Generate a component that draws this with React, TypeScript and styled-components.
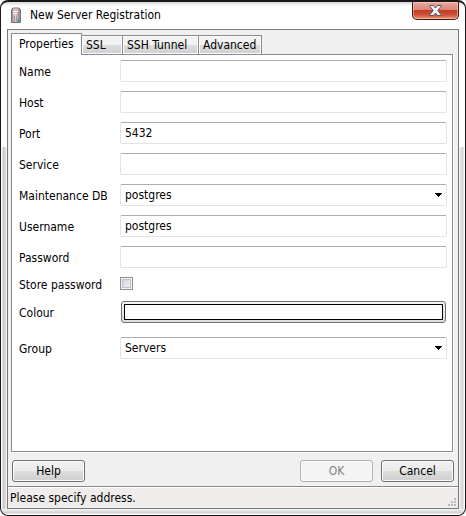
import React, { useState } from "react";
import styled, { createGlobalStyle } from "styled-components";

const GlobalStyle = createGlobalStyle`
  * { box-sizing: border-box; }
  body { margin: 0; background: #fff; }
  body, button, input, select {
    font-family: "DejaVu Sans Condensed", "DejaVu Sans", sans-serif;
    font-size: 12px;
    color: #000;
  }
`;

const Window = styled.form`
  display: flex;
  flex-direction: column;
  min-height: 100vh;
  padding: 0 6px 6px;
  border: 1px solid #1c171b;
  border-top-width: 2px;
  border-radius: 8px;
  background:
    linear-gradient(0deg, #fff 0 1px, #d0cece 2px, #f6f5f5 6px, transparent 6px) 0 100% / 100% 7px no-repeat,
    linear-gradient(90deg, #fff 0 1px, #c6c2c2 2px, #f4f2f2 6px, transparent 6px) 0 145px / 7px 100% no-repeat,
    linear-gradient(270deg, #fff 0 1px, #d2cfcf 2px, #f4f2f2 6px, transparent 6px) 100% 145px / 7px 100% no-repeat,
    linear-gradient(180deg, #d8d5d6, #fff 4px);
`;

const TitleBar = styled.header`
  display: flex;
  align-items: flex-start;
  height: 27px;
  padding-left: 4px;
`;

const ServerIcon = styled.svg`
  flex: none;
  width: 10px;
  height: 17px;
  margin: 5px 9px 0 0;
`;

const Title = styled.h1`
  flex: 1;
  margin: 5px 0 0;
  font-size: 12px;
  font-weight: 400;
  line-height: 16px;
`;

const CloseButton = styled.button`
  display: flex;
  align-items: center;
  justify-content: center;
  width: 47px;
  height: 18px;
  padding: 0;
  border: 1px solid #4a1612;
  border-top: 0;
  border-radius: 0 0 5px 5px;
  background: linear-gradient(#e8a99c, #d98778 46%, #c43c24 50%, #cf5036 75%, #e59a78);
  box-shadow: inset 0 0 0 1px rgba(255, 220, 210, 0.5);
`;

const Client = styled.div`
  flex: 1;
  display: flex;
  flex-direction: column;
  border: 1px solid #777b7b;
  background: #f0f0f0;
`;

const Notebook = styled.div`
  flex: 1;
  display: flex;
  flex-direction: column;
  padding: 3px 5px 0 3px;
`;

const TabStrip = styled.div`
  display: flex;
  align-items: flex-end;
`;

const Tab = styled.button<{ $active: boolean; $width: number }>`
  width: ${(p) => p.$width}px;
  height: ${(p) => (p.$active ? 22 : 19)}px;
  margin-bottom: ${(p) => (p.$active ? -1 : 0)}px;
  padding: 0 0 ${(p) => (p.$active ? 2 : 0)}px ${(p) => (p.$active ? 7 : 4)}px;
  position: relative;
  border: 1px solid #898c95;
  border-bottom: 0;
  background: ${(p) => (p.$active ? "#fff" : "linear-gradient(#f2f2f2 0 48%, #dddddd 52%, #cfcfcf)")};
  box-shadow: inset 0 0 0 1px #fbfbfb;
  text-align: left;
  white-space: nowrap;

  & + & { border-left-width: 0; }
`;

const Panel = styled.div`
  flex: 1;
  padding: 5px 5px 0 7px;
  border: 1px solid #898c95;
  background: #fff;
  box-shadow: 1px 1px 0 #fff;
`;

const Fields = styled.div`
  display: flex;
  flex-direction: column;
  gap: 9px;
`;

const Field = styled.div<{ $height?: number; $before?: number }>`
  display: grid;
  grid-template-columns: 101px 1fr;
  grid-template-rows: ${(p) => p.$height ?? 22}px;
  align-items: center;
  margin-top: ${(p) => p.$before ?? 0}px;
`;

const Label = styled.label`
  padding-top: 2px;
  line-height: 16px;
  white-space: nowrap;
`;

const TextInput = styled.input`
  width: 100%;
  height: 22px;
  padding: 0 4px 1px;
  border: 1px solid #e2e3ea;
  border-top-color: #abadb3;
  border-radius: 2px;
  background: #fff;
  outline: 0;
`;

const SelectWrap = styled.div`
  display: grid;
  align-items: center;

  & > * { grid-area: 1 / 1; }
`;

const Select = styled.select`
  width: 100%;
  height: 22px;
  padding: 0 20px 1px 4px;
  appearance: none;
  border: 1px solid #e2e3ea;
  border-top-color: #abadb3;
  border-radius: 2px;
  background: #fff;
  outline: 0;
`;

const Arrow = styled.svg`
  justify-self: end;
  width: 7px;
  height: 4px;
  margin-right: 5px;
  pointer-events: none;
`;

const CheckBox = styled.input`
  appearance: none;
  width: 13px;
  height: 13px;
  margin: 0;
  border: 1px solid #8e8f8f;
  background: linear-gradient(135deg, #cbcfd5, #f6f6f6);
  box-shadow: inset 0 0 0 1px #f4f4f4, inset 0 0 0 2px #bfc3c9;

  &:checked { background: #4b6f9c; }
`;

const ColourButton = styled.button`
  height: 22px;
  margin: 0 1px;
  padding: 2px;
  border: 1px solid #707070;
  border-radius: 3px;
  background: linear-gradient(#f4f4f4, #dcdcdc);
`;

const Swatch = styled.span`
  display: block;
  height: 16px;
  border: 1px solid #000;
  background: #fff;
`;

const Actions = styled.div`
  display: flex;
  gap: 8px;
  padding: 8px 4px 4px;
`;

const Spacer = styled.span`
  flex: 1;
`;

const PushButton = styled.button`
  width: 73px;
  height: 22px;
  padding: 0;
  border: 1px solid #707070;
  border-radius: 3px;
  background: linear-gradient(#f2f2f2, #ebebeb 48%, #dddddd 52%, #cfcfcf);
  box-shadow: inset 0 0 0 1px #fbfbfb;

  &:disabled {
    border-color: #adb2b5;
    background: #f4f4f4;
    color: #838383;
  }
`;

const StatusBar = styled.footer`
  display: flex;
  align-items: flex-end;
  justify-content: space-between;
  height: 22px;
  padding: 0 2px 2px;
  border-top: 1px solid #85888a;
  background: #f0ecec;
  box-shadow: inset 0 1px 0 #fff;
  line-height: 16px;
`;

const tabs = [
  { name: "Properties", width: 71 },
  { name: "SSL", width: 41 },
  { name: "SSH Tunnel", width: 76 },
  { name: "Advanced", width: 63 },
];

function DropDown({ id, options }: { id: string; options: string[] }) {
  return (
    <SelectWrap>
      <Select id={id}>
        {options.map((o) => <option key={o}>{o}</option>)}
      </Select>
      <Arrow viewBox="0 0 7 4" shapeRendering="crispEdges" aria-hidden="true">
        <path d="M0 0h7v1H6v1H5v1H4v1H3V3H2V2H1V1H0z" />
      </Arrow>
    </SelectWrap>
  );
}

function TextRow({ id, label, value = "", type = "text" }: { id: string; label: string; value?: string; type?: string }) {
  return (
    <Field>
      <Label htmlFor={id}>{label}</Label>
      <TextInput id={id} type={type} defaultValue={value} />
    </Field>
  );
}

const gripDots = [[6, 0], [3, 3], [6, 3], [0, 6], [3, 6], [6, 6]];

export default function App() {
  const [active, setActive] = useState("Properties");
  return (
    <>
      <GlobalStyle />
      <Window onSubmit={(e) => e.preventDefault()}>
        <TitleBar>
          <ServerIcon viewBox="0 0 10 17" aria-hidden="true">
            <defs>
              <linearGradient id="case" x2="1">
                <stop offset="0" stopColor="#8b777f" />
                <stop offset=".35" stopColor="#e2d5da" />
                <stop offset="1" stopColor="#927a85" />
              </linearGradient>
            </defs>
            <path d="M.5 2.500 2 1h6l1.500 1.500v13H.5z" fill="url(#case)" stroke="#806e77" />
            <path d="M1.500 3.500 3 1.500h4l1.500 2z" fill="#c9b9c1" />
            <path d="M2 4.500h5M2 6.500h4" stroke="#f8f2f5" />
            <path d="M3.500 9v6M5.500 9v6" stroke="#b09ca6" />
            <path d="M7 12h1v1h1v1H8v1H7v-1H6v-1h1z" fill="#16b8b8" />
          </ServerIcon>
          <Title>New Server Registration</Title>
          <CloseButton type="button" aria-label="Close">
            <svg width="13" height="11" viewBox="0 0 13 11" aria-hidden="true">
              <path d="M1 .5h3.500l2 2.500 2-2.500H12v1L8.800 5.500l3.200 4v1H8.500l-2-2.500-2 2.500H1v-1l3.200-4L1 1.500z" fill="#f5f5f5" stroke="#535666" />
            </svg>
          </CloseButton>
        </TitleBar>
        <Client>
          <Notebook>
            <TabStrip role="tablist">
              {tabs.map((t) => (
                <Tab key={t.name} type="button" role="tab" aria-selected={active === t.name}
                  $active={active === t.name} $width={t.width} onClick={() => setActive(t.name)}>
                  {t.name}
                </Tab>
              ))}
            </TabStrip>
            <Panel role="tabpanel">
              <Fields>
                <TextRow id="name" label="Name" />
                <TextRow id="host" label="Host" />
                <TextRow id="port" label="Port" value="5432" />
                <TextRow id="service" label="Service" />
                <Field>
                  <Label htmlFor="db">Maintenance DB</Label>
                  <DropDown id="db" options={["postgres"]} />
                </Field>
                <TextRow id="user" label="Username" value="postgres" />
                <TextRow id="password" label="Password" type="password" />
                <Field $height={13}>
                  <Label htmlFor="store">Store password</Label>
                  <CheckBox id="store" type="checkbox" />
                </Field>
                <Field $before={2}>
                  <Label htmlFor="colour">Colour</Label>
                  <ColourButton id="colour" type="button"><Swatch /></ColourButton>
                </Field>
                <Field $before={5}>
                  <Label htmlFor="group">Group</Label>
                  <DropDown id="group" options={["Servers"]} />
                </Field>
              </Fields>
            </Panel>
          </Notebook>
          <Actions>
            <PushButton type="button">Help</PushButton>
            <Spacer />
            <PushButton type="submit" disabled>OK</PushButton>
            <PushButton type="button">Cancel</PushButton>
          </Actions>
          <StatusBar>
            <span>Please specify address.</span>
            <svg width="8" height="8" viewBox="0 0 8 8" shapeRendering="crispEdges" aria-hidden="true">
              {gripDots.map(([x, y]) => (
                <rect key={`${x}-${y}`} x={x} y={y} width="2" height="2" fill="#bdb9b9" />
              ))}
            </svg>
          </StatusBar>
        </Client>
      </Window>
    </>
  );
}
